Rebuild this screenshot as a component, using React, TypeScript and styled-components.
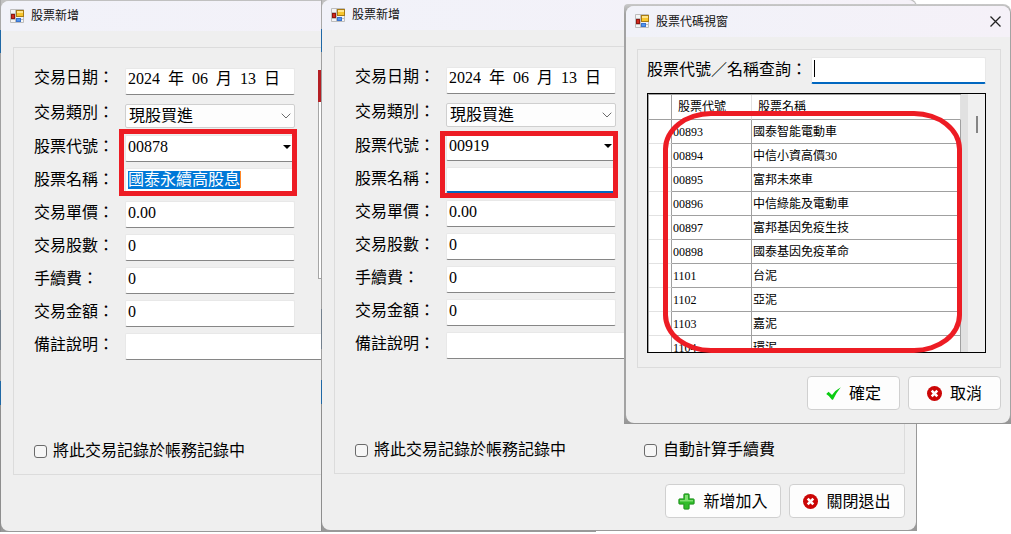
import React, { useId } from "react";
import styled, { createGlobalStyle, css } from "styled-components";

const font = `"Liberation Serif", "Noto Sans CJK TC", serif`;
const uiFont = `"Noto Sans CJK TC", sans-serif`;

const GlobalStyle = createGlobalStyle`
  * { box-sizing: border-box; }
  body { margin: 0; background: #ffffff; overflow: hidden; }
  button, input, select { font-family: ${font}; color: #000000; }
`;

const Desktop = styled.main`
  position: relative;
  min-height: 100vh;
  overflow: hidden;
  font-family: ${font};
  font-size: 16px;
  color: #000000;
`;

const Frame = styled.section<{ $left?: number; $top: number; $docked?: boolean }>`
  position: absolute;
  top: ${(p) => p.$top}px;
  ${(p) =>
    p.$docked
      ? css`
          right: 0;
          width: 387px;
          padding: 2px 1px 1px 2px;
          border-radius: 4px 8px 0 0;
          background: linear-gradient(#c9c9c9, #a3a3a3 10px, #a3a3a3 calc(100% - 10px), #949494);
        `
      : css`
          left: ${p.$left}px;
          width: 596px;
          padding: 1px;
          border-radius: 0 8px 0 0;
          background:
            linear-gradient(
                #a8a8a8 30px, #1f68a5 30px, #1f68a5 53px, #a0a0a0 53px, #a0a0a0 310px,
                #74818e 310px, #74818e 350px, #a0a0a0 350px, #a0a0a0 381px,
                #1f68a5 381px, #1f68a5 405px, #8e8e8e 405px
              )
              0 0 / 1px 100% no-repeat,
            linear-gradient(#c0c0c0 8px, #999999 40px);
        `}
`;

const WindowBox = styled.div`
  display: flex;
  flex-direction: column;
  border-radius: 8px;
  overflow: hidden;
  background: #efefef;
`;

const TitleBar = styled.header<{ $height: number }>`
  display: flex;
  align-items: center;
  gap: 6px;
  height: ${(p) => p.$height}px;
  padding: 0 9px;
  background: linear-gradient(90deg, #f1f2f9, #f5f1f8);
  font: 12px/16px ${uiFont};
  color: #111111;
`;

const Title = styled.h1`
  flex: 1;
  margin: 0;
  padding-bottom: 2px;
  font-size: 12px;
  font-weight: 400;
`;

const CloseButton = styled.button`
  display: flex;
  padding: 0;
  border: 0;
  background: none;
`;

const FormBody = styled.form`
  padding: 16px 11px 12px 12px;
`;

const PickerBody = styled.form`
  padding: 12px 9px 13px 11px;
`;

const Group = styled.div`
  border: 1px solid #dcdcdc;
  padding: 20px 20px 15px;
`;

const Columns = styled.div`
  display: flex;
`;

const Rows = styled.div`
  display: flex;
  flex-direction: column;
  gap: 6px;
`;

const Row = styled.div<{ $tall?: boolean }>`
  display: flex;
  height: ${(p) => (p.$tall ? 28 : 27)}px;
`;

const Label = styled.label<{ $raised?: boolean }>`
  width: 91px;
  line-height: ${(p) => (p.$raised ? 20 : 24)}px;
  white-space: nowrap;
`;

const Field = styled.div<{ $wide?: boolean; $active?: boolean }>`
  display: flex;
  align-items: center;
  width: ${(p) => (p.$wide ? 400 : 170)}px;
  margin-bottom: ${(p) => (p.$active ? 1 : 0)}px;
  padding: 0 3px 4px 2px;
  border: 1px solid #e8e8e8;
  border-bottom: ${(p) => (p.$active ? "2px solid #0067c0" : "1px solid #868686")};
  border-radius: 2px;
  background: #ffffff;
`;

const Input = styled.input<{ $selected?: boolean }>`
  min-width: 0;
  height: 18px;
  padding: 0;
  border: 0;
  outline: 0;
  font-size: 16px;
  line-height: 18px;
  ${(p) =>
    p.$selected
      ? css`
          width: 112px;
          background: #0078d7;
          color: #ffffff;
        `
      : css`
          flex: 1;
          background: transparent;
        `}
`;

const Caret = styled.span<{ $color: string }>`
  width: 1px;
  height: 17px;
  background: ${(p) => p.$color};
`;

const DateField = styled(Field)`
  gap: 8px;
  padding: 0 2px 6px 2px;
  line-height: 18px;
`;

const DatePart = styled.input<{ $digits: number }>`
  width: ${(p) => p.$digits * 8}px;
  height: 18px;
  padding: 0;
  border: 0;
  outline: 0;
  font-size: 16px;
`;

const SelectBox = styled.div`
  display: grid;
  align-items: center;
  width: 170px;
  height: 24px;
  margin-top: 3px;
  > * { grid-area: 1 / 1; }
  > svg { justify-self: end; margin-right: 4px; pointer-events: none; }
`;

const Select = styled.select`
  appearance: none;
  width: 100%;
  height: 24px;
  padding: 0 20px 0 3px;
  border: 1px solid #cfcfcf;
  border-radius: 2px;
  background: #fdfdfd;
  font-size: 16px;
  line-height: 22px;
`;

const SidePanel = styled.div`
  flex: 1;
  height: 209px;
  margin: 2px 0 0 23px;
  border: 1px solid #a6a6a6;
  background: #ffffff;
`;

const SidePanelBar = styled.div`
  height: 32px;
  margin: -1px;
  background: #b51f24;
`;

const RemarkRow = styled(Row)`
  margin-top: 6px;
`;

const Options = styled.div`
  display: grid;
  grid-template-columns: 289px 1fr;
  margin-top: 83px;
`;

const CheckLabel = styled.label`
  display: flex;
  align-items: center;
  gap: 6px;
  line-height: 16px;
`;

const Checkbox = styled.input`
  appearance: none;
  width: 13px;
  height: 13px;
  margin: 0;
  border: 1px solid #6a6a6a;
  border-radius: 3px;
  background: #f6f6f6;
`;

const Actions = styled.footer<{ $gap: number }>`
  display: flex;
  justify-content: flex-end;
  gap: 8px;
  margin-top: ${(p) => p.$gap}px;
`;

const ActionButton = styled.button<{ $wide?: boolean }>`
  display: flex;
  align-items: center;
  justify-content: center;
  gap: 8px;
  width: ${(p) => (p.$wide ? 116 : 93)}px;
  height: 34px;
  padding: 1px 0 0;
  border: 1px solid #d0d0d0;
  border-radius: 4px;
  background: #fdfdfd;
  font-size: 16px;
  line-height: 20px;
`;

const Highlight = styled.div<{ $top: number }>`
  position: absolute;
  left: 119px;
  top: ${(p) => p.$top}px;
  width: 178px;
  height: 67px;
  border: 5px solid #ed1c24;
  pointer-events: none;
`;

const RoundHighlight = styled.div`
  position: absolute;
  left: 39px;
  top: 107px;
  width: 299px;
  height: 242px;
  border: 5px solid #ed1c24;
  border-radius: 48px / 38px;
  pointer-events: none;
`;

const PickerGroup = styled.div`
  border: 1px solid #dcdcdc;
  padding: 7px 14px 14px 9px;
`;

const SearchRow = styled.div`
  display: flex;
  height: 27px;
`;

const SearchLabel = styled.label`
  flex: none;
  width: 164px;
  line-height: 26px;
  white-space: nowrap;
`;

const SearchField = styled(Field)`
  flex: 1;
  min-width: 0;
  margin-bottom: 0;
`;

const ListFrame = styled.div`
  display: flex;
  height: 260px;
  margin-top: 9px;
  border: 1px solid #000000;
  overflow: hidden;
`;

const StockTable = styled.table`
  flex: 1;
  table-layout: fixed;
  align-self: flex-start;
  border-spacing: 0;
  border-top: 1px solid #a0a0a0;
  border-left: 1px solid #a0a0a0;
  background: #ffffff;
  font-size: 12px;
  line-height: 16px;
  th, td {
    height: 24px;
    padding: 0 0 0 1px;
    border-right: 1px solid #a0a0a0;
    border-bottom: 1px solid #a0a0a0;
    text-align: left;
    font-weight: 400;
    white-space: nowrap;
  }
  thead th { height: 25px; padding-left: 6px; border-right-color: #e2e2e2; }
  thead th:first-child { border-right-color: #a0a0a0; }
  tbody th { border-bottom-color: #e2e2e2; }
`;

const Gutter = styled.div`
  width: 7px;
  background: #e1e1e1;
`;

const ScrollTrack = styled.div`
  display: flex;
  justify-content: center;
  width: 17px;
  padding-top: 22px;
  background: #f0f0f0;
`;

const ScrollThumb = styled.div`
  width: 2px;
  height: 17px;
  background: #858585;
`;

const AppIcon = () => (
  <svg width="15" height="15" viewBox="0 0 15 15" aria-hidden="true">
    <path d="M.5.5h13v13H.5zM.5 4.500h13M.5 10.500h13M5.500.5v13" fill="#f4f4f4" stroke="#bdbdbd" />
    <rect x="6.500" y="1.500" width="7" height="6" fill="#f7c52c" stroke="#a87a14" />
    <path d="M7 2h6v2H7z" fill="#ffe58a" />
    <rect x="1.500" y="5.500" width="3" height="4" fill="#d2281c" stroke="#8e1610" />
    <rect x="6.500" y="9.500" width="4" height="3" fill="#4f94ee" stroke="#3a72cd" />
  </svg>
);

const PlusIcon = () => (
  <svg width="17" height="17" viewBox="0 0 17 17" aria-hidden="true">
    <path
      d="M6.5.9h4q.6 0 .6.6v4.4h4.4q.6 0 .6.6v4q0 .6-.6.6h-4.4v4.4q0 .6-.6.6h-4q-.6 0-.6-.6v-4.4H1.500q-.6 0-.6-.6v-4q0-.6.6-.6h4.400V1.500q0-.6.6-.6z"
      fill="#31bd2b"
      stroke="#1c8f1a"
    />
    <path d="M7 2h3v5h5v1.500H2V7h5z" fill="#7fe070" />
  </svg>
);

const CrossIcon = () => (
  <svg width="15" height="15" viewBox="0 0 15 15" aria-hidden="true">
    <circle cx="7.5" cy="7.5" r="7.500" fill="#cb0606" />
    <path d="M4.700 4.700l5.600 5.600M10.300 4.700l-5.600 5.600" stroke="#ffffff" strokeWidth="2.600" />
  </svg>
);

const TickIcon = () => (
  <svg width="15" height="13" viewBox="0 0 15 13" aria-hidden="true">
    <path d="M.2 7L2.600 4.800 6 7.900Q9.500 3 14.800.2 10.300 5.500 7 12.800H6Q3.600 9 .2 7z" fill="#0bcc12" />
  </svg>
);

const CloseIcon = () => (
  <svg width="11" height="11" viewBox="0 0 11 11" aria-hidden="true">
    <path d="M.5.5l10 10M10.500.5l-10 10" stroke="#222222" strokeWidth="1.300" />
  </svg>
);

const Chevron = () => (
  <svg width="10" height="6" viewBox="0 0 10 6" aria-hidden="true">
    <path d="M.7.7L5 5 9.300.7" fill="none" stroke="#6b6b6b" />
  </svg>
);

const DropArrow = () => (
  <svg width="8" height="4" viewBox="0 0 8 4" aria-hidden="true">
    <path d="M0 0h8L4 4z" fill="#000000" />
  </svg>
);

interface TradeWindowProps {
  left: number;
  top: number;
  code: string;
  name: string;
  nameState: "selected" | "focused";
  markTop: number;
  autoFee?: boolean;
}

const amounts = [
  ["交易單價：", "0.00"],
  ["交易股數：", "0"],
  ["手續費：", "0"],
  ["交易金額：", "0"],
];

function TradeWindow({ left, top, code, name, nameState, markTop, autoFee }: TradeWindowProps) {
  const id = useId();
  const selected = nameState === "selected";
  return (
    <Frame $left={left} $top={top} aria-label="股票新增">
      <WindowBox>
        <TitleBar $height={30}>
          <AppIcon />
          <Title>股票新增</Title>
        </TitleBar>
        <FormBody onSubmit={(e) => e.preventDefault()}>
          <Group>
            <Columns>
              <Rows>
                <Row>
                  <Label $raised htmlFor={`${id}-year`}>交易日期：</Label>
                  <DateField>
                    <DatePart id={`${id}-year`} $digits={4} defaultValue="2024" />
                    年
                    <DatePart $digits={2} defaultValue="06" aria-label="月" />
                    月
                    <DatePart $digits={2} defaultValue="13" aria-label="日" />
                    日
                  </DateField>
                </Row>
                <Row $tall>
                  <Label htmlFor={`${id}-kind`}>交易類別：</Label>
                  <SelectBox>
                    <Select id={`${id}-kind`}>
                      <option>現股買進</option>
                    </Select>
                    <Chevron />
                  </SelectBox>
                </Row>
                <Row>
                  <Label htmlFor={`${id}-code`}>股票代號：</Label>
                  <Field>
                    <Input id={`${id}-code`} defaultValue={code} />
                    <DropArrow />
                  </Field>
                </Row>
                <Row>
                  <Label htmlFor={`${id}-name`}>股票名稱：</Label>
                  <Field $active={!selected}>
                    <Input id={`${id}-name`} $selected={selected} defaultValue={name} />
                    {selected && <Caret $color="#ff8728" />}
                  </Field>
                </Row>
                {amounts.map(([label, value]) => (
                  <Row key={label}>
                    <Label htmlFor={id + label}>{label}</Label>
                    <Field>
                      <Input id={id + label} defaultValue={value} />
                    </Field>
                  </Row>
                ))}
              </Rows>
              <SidePanel>
                <SidePanelBar />
              </SidePanel>
            </Columns>
            <RemarkRow>
              <Label htmlFor={`${id}-remark`}>備註說明：</Label>
              <Field $wide>
                <Input id={`${id}-remark`} />
              </Field>
            </RemarkRow>
            <Options>
              <CheckLabel>
                <Checkbox type="checkbox" />
                將此交易記錄於帳務記錄中
              </CheckLabel>
              {autoFee && (
                <CheckLabel>
                  <Checkbox type="checkbox" />
                  自動計算手續費
                </CheckLabel>
              )}
            </Options>
          </Group>
          <Actions $gap={10}>
            <ActionButton $wide type="submit">
              <PlusIcon />
              新增加入
            </ActionButton>
            <ActionButton $wide type="button">
              <CrossIcon />
              關閉退出
            </ActionButton>
          </Actions>
        </FormBody>
      </WindowBox>
      <Highlight $top={markTop} />
    </Frame>
  );
}

const stocks = [
  ["00893", "國泰智能電動車"],
  ["00894", "中信小資高價30"],
  ["00895", "富邦未來車"],
  ["00896", "中信綠能及電動車"],
  ["00897", "富邦基因免疫生技"],
  ["00898", "國泰基因免疫革命"],
  ["1101", "台泥"],
  ["1102", "亞泥"],
  ["1103", "嘉泥"],
  ["1104", "環泥"],
];

function StockPicker() {
  return (
    <Frame $docked $top={4} aria-label="股票代碼視窗">
      <WindowBox>
        <TitleBar $height={31}>
          <AppIcon />
          <Title>股票代碼視窗</Title>
          <CloseButton type="button" aria-label="關閉">
            <CloseIcon />
          </CloseButton>
        </TitleBar>
        <PickerBody onSubmit={(e) => e.preventDefault()}>
          <PickerGroup>
            <SearchRow>
              <SearchLabel htmlFor="stock-search">股票代號／名稱查詢：</SearchLabel>
              <SearchField $active>
                <Caret $color="#000000" />
                <Input id="stock-search" />
              </SearchField>
            </SearchRow>
            <ListFrame>
              <StockTable>
                <colgroup>
                  <col style={{ width: 23 }} />
                  <col style={{ width: 80 }} />
                  <col />
                </colgroup>
                <thead>
                  <tr>
                    <th />
                    <th scope="col">股票代號</th>
                    <th scope="col">股票名稱</th>
                  </tr>
                </thead>
                <tbody>
                  {stocks.map(([code, name]) => (
                    <tr key={code}>
                      <th />
                      <td>{code}</td>
                      <td>{name}</td>
                    </tr>
                  ))}
                </tbody>
              </StockTable>
              <Gutter />
              <ScrollTrack>
                <ScrollThumb />
              </ScrollTrack>
            </ListFrame>
          </PickerGroup>
          <Actions $gap={8}>
            <ActionButton type="submit">
              <TickIcon />
              確定
            </ActionButton>
            <ActionButton type="button">
              <CrossIcon />
              取消
            </ActionButton>
          </Actions>
        </PickerBody>
      </WindowBox>
      <RoundHighlight />
    </Frame>
  );
}

export default function App() {
  return (
    <>
      <GlobalStyle />
      <Desktop>
        <TradeWindow left={0} top={0} code="00878" name="國泰永續高股息" nameState="selected" markTop={129} />
        <TradeWindow left={321} top={-1} code="00919" name="" nameState="focused" markTop={132} autoFee />
        <StockPicker />
      </Desktop>
    </>
  );
}
